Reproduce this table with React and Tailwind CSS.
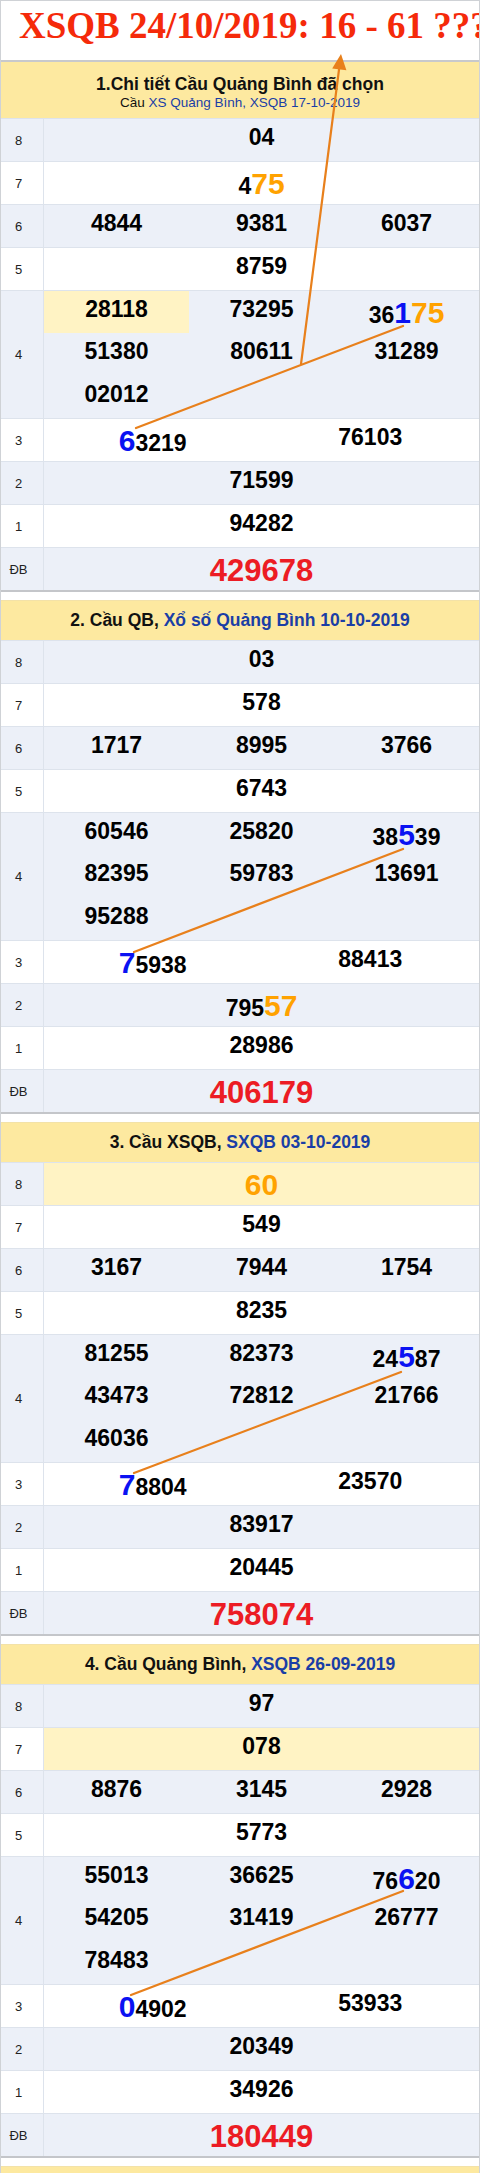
import React from "react";

const SANS = "font-['Liberation_Sans',Arial,sans-serif]";

// o = orange big digit, b = blue big digit
const sections = [
    {
        no: 1,
        g8: ["04"],
        g7: [["4", ["75", "o"]]],
        g6: ["4844", "9381", "6037"],
        g5: ["8759"],
        g4: ["28118", "73295", ["36", ["1", "b"], ["75", "o"]], "51380", "80611", "31289", "02012"],
        g3: [[["6", "b"], "3219"], "76103"],
        g2: ["71599"],
        g1: ["94282"],
        db: "429678",
        hl4: 0,
    },
    {
        no: 2,
        g8: ["03"],
        g7: ["578"],
        g6: ["1717", "8995", "3766"],
        g5: ["6743"],
        g4: ["60546", "25820", ["38", ["5", "b"], "39"], "82395", "59783", "13691", "95288"],
        g3: [[["7", "b"], "5938"], "88413"],
        g2: [["795", ["57", "o"]]],
        g1: ["28986"],
        db: "406179",
    },
    {
        no: 3,
        g8: [[["60", "o"]]],
        hl8: true,
        g7: ["549"],
        g6: ["3167", "7944", "1754"],
        g5: ["8235"],
        g4: ["81255", "82373", ["24", ["5", "b"], "87"], "43473", "72812", "21766", "46036"],
        g3: [[["7", "b"], "8804"], "23570"],
        g2: ["83917"],
        g1: ["20445"],
        db: "758074",
    },
    {
        no: 4,
        g8: ["97"],
        g7: ["078"],
        hl7: true,
        g6: ["8876", "3145", "2928"],
        g5: ["5773"],
        g4: ["55013", "36625", ["76", ["6", "b"], "20"], "54205", "31419", "26777", "78483"],
        g3: [[["0", "b"], "4902"], "53933"],
        g2: ["20349"],
        g1: ["34926"],
        db: "180449",
    },
];

const Num = ({ v }) => {
    const parts = Array.isArray(v) ? v : [v];
    return (
        <>
            {parts.map((p, i) =>
                typeof p === "string" ? (
                    <span key={i}>{p}</span>
                ) : (
                    <span
                        key={i}
                        className={
                            p[1] === "o"
                                ? "text-[30px] text-[#ffa200]"
                                : "text-[30px] text-[#0a12f2]"
                        }
                    >
                        {p[0]}
                    </span>
                )
            )}
        </>
    );
};

const Cell = ({ v, hl }) => (
    <div
        className={`flex justify-center pt-[5px] h-full ${hl ? "bg-[#fff3c4]" : ""}`}
    >
        <div className="whitespace-nowrap">
            <Num v={v} />
        </div>
    </div>
);

const Row = ({ label, alt, hl, tall, children }) => (
    <div
        className={`flex border-t border-[#dde3ec] ${tall ? "h-[128px]" : "h-[43px]"} ${
            alt ? "bg-[#ecf0f8]" : "bg-white"
        }`}
    >
        <div className="w-[43px] shrink-0 pr-[7px] flex items-center justify-center text-[13px] font-normal text-[#222] border-r border-[#dde3ec]">
            {label}
        </div>
        <div className={`flex-1 ${hl ? "bg-[#fff3c4]" : ""}`}>{children}</div>
    </div>
);

const Header = ({ no }) => {
    if (no === 1) {
        return (
            <div className="h-[56px] bg-[#fde9a0] flex flex-col items-center pt-[12px]">
                <div className="text-[17.5px] font-bold text-[#111] leading-[20px]">
                    1.Chi tiết Cầu Quảng Bình đã chọn
                </div>
                <div className="text-[13.5px] text-[#111] leading-[16px] mt-[1px]">
                    Cầu <span className="text-[#1a3ea6]">XS Quảng Bình, XSQB 17-10-2019</span>
                </div>
            </div>
        );
    }
    const titles = {
        2: ["2. Cầu QB, ", "Xổ số Quảng Bình 10-10-2019"],
        3: ["3. Cầu XSQB, ", "SXQB 03-10-2019"],
        4: ["4. Cầu Quảng Bình, ", "XSQB 26-09-2019"],
    };
    const [a, b] = titles[no];
    return (
        <div className="mt-[8px] h-[40px] bg-[#fde9a0] border-t border-[#f3e2a8] flex items-center justify-center text-[17.5px] font-bold text-[#111]">
            <div className="whitespace-pre">
                {a}
                <span className="text-[#1a3ea6]">{b}</span>
            </div>
        </div>
    );
};

const Section = ({ s }) => (
    <div>
        <Header no={s.no} />
        <div className="border-b-2 border-[#c4c6ca] text-[23px] font-bold text-black leading-[normal]">
            <Row label="8" alt hl={s.hl8}>
                <Cell v={s.g8[0]} />
            </Row>
            <Row label="7" hl={s.hl7}>
                <Cell v={s.g7[0]} />
            </Row>
            <Row label="6" alt>
                <div className="grid grid-cols-3 h-full">
                    {s.g6.map((v, i) => (
                        <Cell key={i} v={v} />
                    ))}
                </div>
            </Row>
            <Row label="5">
                <Cell v={s.g5[0]} />
            </Row>
            <Row label="4" alt tall>
                <div className="grid grid-cols-3 grid-rows-3 h-full">
                    {s.g4.map((v, i) => (
                        <Cell key={i} v={v} hl={s.hl4 === i} />
                    ))}
                </div>
            </Row>
            <Row label="3">
                <div className="grid grid-cols-2 h-full">
                    {s.g3.map((v, i) => (
                        <Cell key={i} v={v} />
                    ))}
                </div>
            </Row>
            <Row label="2" alt>
                <Cell v={s.g2[0]} />
            </Row>
            <Row label="1">
                <Cell v={s.g1[0]} />
            </Row>
            <Row label="ĐB" alt>
                <div className="flex justify-center pt-[5px] text-[31px] text-[#ec1c24]">
                    {s.db}
                </div>
            </Row>
        </div>
    </div>
);

export default function App() {
    return (
        <div
            className={`relative w-[480px] h-[2173px] overflow-hidden bg-white border-l border-r border-t border-[#cfd2d6] ${SANS}`}
        >
            <div className="h-[61px] border-b-2 border-[#c8c9cc] pt-[3px] pl-[18px] whitespace-nowrap overflow-hidden">
                <span className="font-['Liberation_Serif','Times_New_Roman',serif] font-bold text-[37px] leading-[normal] text-[#f52a0a]">
                    XSQB 24/10/2019: 16 - 61 ???
                </span>
            </div>

            {sections.map((s) => (
                <Section key={s.no} s={s} />
            ))}

            <div className="mt-[8px] h-[40px] bg-[#fde9a0] border-t border-[#f3e2a8]" />

            {/* orange bridge lines drawn over the tables */}
            <svg
                className="absolute left-0 top-0 pointer-events-none"
                width="480"
                height="2173"
                viewBox="0 0 480 2173"
            >
                <g stroke="#e8801c" strokeWidth="2.2" strokeLinecap="round" fill="none">
                    <line x1="135" y1="427" x2="402" y2="325" />
                    <line x1="300" y1="363" x2="338.6" y2="64" />
                    <line x1="133" y1="951" x2="402" y2="848" />
                    <line x1="133" y1="1472" x2="400" y2="1371" />
                    <line x1="130" y1="1994" x2="402" y2="1890" />
                </g>
                <polygon points="340,53 331.2,67.5 345.4,69.3" fill="#e8801c" />
            </svg>
        </div>
    );
}
